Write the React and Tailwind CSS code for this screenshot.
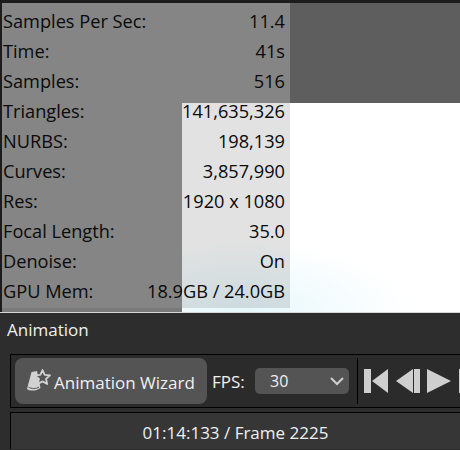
import React from 'react';

const stats = [
  ['Samples Per Sec:', '11.4'],
  ['Time:', '41s'],
  ['Samples:', '516'],
  ['Triangles:', '141,635,326'],
  ['NURBS:', '198,139'],
  ['Curves:', '3,857,990'],
  ['Res:', '1920 x 1080'],
  ['Focal Length:', '35.0'],
  ['Denoise:', 'On'],
  ['GPU Mem:', '18.9GB / 24.0GB'],
];

const WizardIcon = () => (
  <svg width="26" height="24" viewBox="0 0 26 24" className="shrink-0">
    <path d="M5.500 3 L11 2 L14.500 19 C11 22 4 22.500 1 20 Z" fill="#d2d2d2" />
    <path d="M2.500 18 C5 20 10.500 20 13 18" fill="none" stroke="#545454" strokeWidth="1" />
    <path d="M16.500 1 L18.700 5.800 L24 6.400 L20 9.900 L21.200 15 L16.500 12.400 L11.800 15 L13 9.900 L9 6.400 L14.300 5.800 Z" fill="#545454" stroke="#d2d2d2" strokeWidth="1.800" strokeLinejoin="round" />
  </svg>
);

const Transport = () => (
  <svg width="103" height="26" viewBox="0 0 103 26" className="block shrink-0">
    <rect x="6" y="1" width="7" height="24" fill="#cfcfcf" />
    <path d="M30 1 V25 L14 13 Z" fill="#cfcfcf" />
    <path d="M55 1 V25 L38 13 Z" fill="#cfcfcf" />
    <rect x="56" y="1" width="6" height="24" fill="#cfcfcf" />
    <path d="M69 1 L93 13 L69 25 Z" fill="#cfcfcf" />
    <rect x="101" y="1" width="2" height="24" fill="#cfcfcf" />
  </svg>
);

export default function App() {
  return (
    <div className="w-[460px] h-[450px] overflow-hidden bg-[#2d2d2d] font-['Open_Sans','Noto_Sans',sans-serif]">
      {/* Viewport */}
      <div className="relative h-[313px] bg-[#1c1c1c] pt-[3px] pl-[2px] border-b border-b-[#d8d8d8]">
        <div className="grid grid-cols-[180px_278px] grid-rows-[100px_209px] h-[309px]">
          <div className="bg-[#858585]" />
          <div className="flex">
            <div className="w-[108px] bg-[#858585]" />
            <div className="flex-1 bg-[#5e5e5e]" />
          </div>
          <div className="bg-[#858585] border-b-4 border-b-[#7a7a7a]" />
          <div className="bg-[radial-gradient(ellipse_170px_70px_at_60px_100%,#e6f8fc_0%,#ffffff_100%)]">
            <div className="w-[108px] h-[205px] bg-[#0000001d]" />
          </div>
        </div>
        <div className="absolute left-[3px] top-[6px] w-[282px] text-[18.200px] leading-[30px] text-[#0a0a0a]">
          {stats.map(([label, value]) => (
            <div key={label} className="flex justify-between h-[30px] whitespace-nowrap">
              <span>{label}</span>
              <span>{value}</span>
            </div>
          ))}
        </div>
      </div>

      {/* Animation panel */}
      <div className="h-[41px] pl-[7px] pt-[5px] text-[17px] leading-[24px] text-[#f0f0f0]">Animation</div>
      <div className="ml-[10px] h-[54px] border-y border-l border-black flex items-center bg-[#2b2b2b] pl-[4px] text-[#f0f0f0] overflow-hidden">
        <button className="w-[192px] h-[46px] shrink-0 rounded-lg bg-[#545454] flex items-center pl-[11px] gap-[2px] text-[17px]">
          <WizardIcon />
          <span className="pt-[3px]">Animation Wizard</span>
        </button>
        <span className="ml-[5px] pt-[1px] text-[17px] w-[43px] shrink-0">FPS:</span>
        <div className="w-[94px] h-[26px] shrink-0 rounded-[5px] bg-[#545454] flex items-center justify-between pl-[15px] pr-[4px] text-[16px]">
          <span>30</span>
          <svg width="16" height="10" viewBox="0 0 16 10">
            <path d="M2 2 L8 8 L14 2" fill="none" stroke="#cfcfcf" strokeWidth="2" />
          </svg>
        </div>
        <div className="ml-[8px] w-px h-[46px] bg-black shrink-0" />
        <Transport />
      </div>
      <div className="mt-[4px] ml-[10px] h-[37px] border-t border-l border-black bg-[#363636] flex items-center justify-center pt-[4px] text-[17px] text-[#f0f0f0]">
        01:14:133 / Frame 2225
      </div>
    </div>
  );
}
